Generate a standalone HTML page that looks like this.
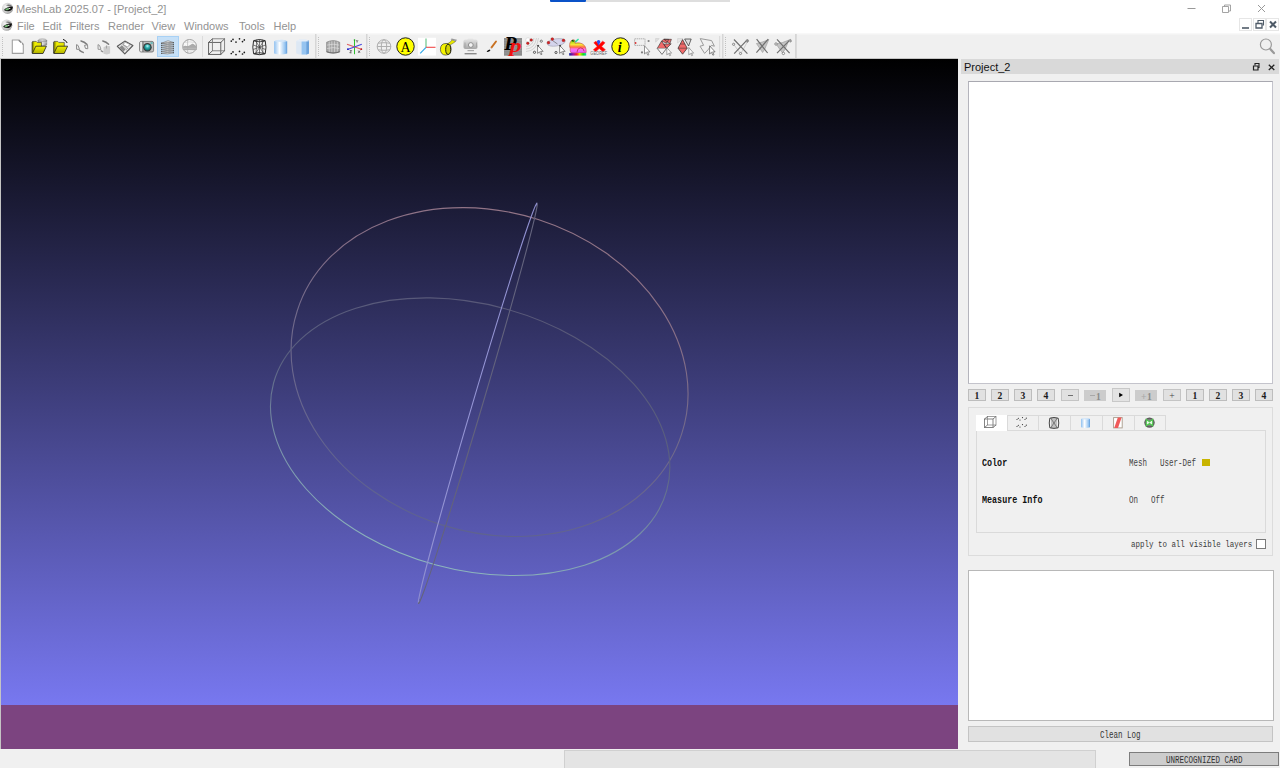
<!DOCTYPE html>
<html><head><meta charset="utf-8">
<style>
*{margin:0;padding:0;box-sizing:border-box}
html,body{width:1280px;height:768px;overflow:hidden;background:#f0f0f0;font-family:"Liberation Sans",sans-serif;position:relative}
.abs{position:absolute}
#title{left:0;top:0;width:1280px;height:34px;background:#fff}
.t{position:absolute;font-size:11px;color:#939393;white-space:nowrap;line-height:11px}
#vp{left:0;top:58px;width:958px;height:691px;background:#c4c4c4}
#vpin{left:1px;top:1px;width:957px;height:690px;background:linear-gradient(#000 0%,#7878f0 93.8%)}
#log{left:0;top:646px;width:957px;height:44px;background:rgba(128,16,16,0.5)}
#dock{left:958px;top:58px;width:322px;height:690px;background:#f0f0f0}
.m{position:absolute;font-family:"Liberation Mono",monospace;white-space:nowrap;font-size:10px;line-height:12px;transform-origin:0 0}
.m.r{transform:scaleX(0.75);color:#444}
.m.b{transform:scaleX(0.84);font-weight:bold;color:#111}
.btn{position:absolute;background:#e1e1e1;border:1px solid #bdbdbd;font-family:"Liberation Serif",serif;font-weight:bold;font-size:9.6px;line-height:11px;text-align:center;color:#1a1a1a}
</style></head><body>
<div id="title" class="abs"></div>
<!-- top blue/gray bars -->
<div class="abs" style="left:550px;top:0;width:36px;height:1.5px;background:#0a52c8;border-radius:0 0 1px 1px"></div>
<div class="abs" style="left:586px;top:0;width:144px;height:1.5px;background:#dedede"></div>

<!-- logos -->
<svg class="abs" style="left:0;top:0" width="16" height="34" viewBox="0 0 16 34">
 <defs><radialGradient id="lg" cx="0.35" cy="0.35" r="0.7"><stop offset="0" stop-color="#f4f4f4"/><stop offset="0.7" stop-color="#c8c8c8"/><stop offset="1" stop-color="#9a9a9a"/></radialGradient></defs>
 <g>
  <circle cx="7.5" cy="8.4" r="5.6" fill="url(#lg)"/>
  <path d="M6 5.2q4-1.6 6.4 1.2l-0.8 1.2q-2.5-1.8-5.6-2.4z" fill="#777"/>
  <path d="M3.9 9.9Q7 6.6 12.9 6.8Q12.6 10.2 9.5 11.1Q6 11.5 3.9 9.9Z" fill="#111"/>
  <ellipse cx="7.3" cy="9.2" rx="2" ry="1" fill="#74b874" transform="rotate(-14 7.3 9.2)"/>
  <ellipse cx="9.6" cy="8.5" rx="0.9" ry="0.5" fill="#e8e8e8" transform="rotate(-20 9.6 8.5)"/>
 </g>
 <g transform="translate(-0.8 16.8)">
  <circle cx="7.5" cy="8.4" r="5.6" fill="url(#lg)"/>
  <path d="M6 5.2q4-1.6 6.4 1.2l-0.8 1.2q-2.5-1.8-5.6-2.4z" fill="#777"/>
  <path d="M3.9 9.9Q7 6.6 12.9 6.8Q12.6 10.2 9.5 11.1Q6 11.5 3.9 9.9Z" fill="#111"/>
  <ellipse cx="7.3" cy="9.2" rx="2" ry="1" fill="#74b874" transform="rotate(-14 7.3 9.2)"/>
  <ellipse cx="9.6" cy="8.5" rx="0.9" ry="0.5" fill="#e8e8e8" transform="rotate(-20 9.6 8.5)"/>
 </g>
</svg>
<div class="t" style="left:16px;top:4px">MeshLab 2025.07 - [Project_2]</div>
<div class="t" style="left:17px;top:21px">File</div>
<div class="t" style="left:42.5px;top:21px">Edit</div>
<div class="t" style="left:69.5px;top:21px">Filters</div>
<div class="t" style="left:108px;top:21px">Render</div>
<div class="t" style="left:151.5px;top:21px">View</div>
<div class="t" style="left:184px;top:21px">Windows</div>
<div class="t" style="left:239px;top:21px">Tools</div>
<div class="t" style="left:273.5px;top:21px">Help</div>

<!-- window controls -->
<svg class="abs" style="left:1180px;top:0" width="100" height="34" viewBox="1180 0 100 34">
 <path d="M1187.5 8.5H1195.5" stroke="#999" stroke-width="1"/>
 <path d="M1222.5 6.5h6v6h-6z M1224.5 6.5v-1.5h6v6h-1.5" fill="none" stroke="#9a9a9a" stroke-width="0.9"/>
 <path d="M1258 5L1265 12M1265 5L1258 12" stroke="#999" stroke-width="1"/>
 <rect x="1239.5" y="18.5" width="12" height="12" fill="#fff" stroke="#e6e6e6"/>
 <rect x="1253.5" y="18.5" width="12" height="12" fill="#fff" stroke="#e6e6e6"/>
 <rect x="1266.5" y="18.5" width="12" height="12" fill="#fff" stroke="#e6e6e6"/>
 <path d="M1242 28H1249" stroke="#4f5b68" stroke-width="1.6"/>
 <path d="M1256 23.5h6v4.5h-6z" fill="none" stroke="#4f5b68" stroke-width="1.3"/>
 <path d="M1258 23v-2.5h5.5v4.5h-1" fill="none" stroke="#4f5b68" stroke-width="1.1"/>
 <path d="M1270 21.5L1276 27.5M1276 21.5L1270 27.5" stroke="#4f5b68" stroke-width="2"/>
</svg>

<!-- toolbar -->
<div class="abs" style="left:0;top:34px;width:1280px;height:24px;background:#f0f0f0"></div>
<svg class="abs" style="left:0;top:0" width="1280" height="60" viewBox="0 0 1280 60">
 <defs>
  <linearGradient id="fy" x1="0" y1="0" x2="0" y2="1"><stop offset="0" stop-color="#f4f400"/><stop offset="1" stop-color="#b0b000"/></linearGradient>
  <linearGradient id="fyb" x1="0" y1="0" x2="1" y2="0"><stop offset="0" stop-color="#606000"/><stop offset="0.3" stop-color="#f0f000"/><stop offset="1" stop-color="#e0e000"/></linearGradient>
  <linearGradient id="cyl1" x1="0" y1="0" x2="1" y2="0"><stop offset="0" stop-color="#8fc0f0"/><stop offset="0.42" stop-color="#ffffff"/><stop offset="0.85" stop-color="#92c2f0"/><stop offset="1" stop-color="#5f9ad8"/></linearGradient>
  <linearGradient id="cylg" x1="0" y1="0" x2="1" y2="0"><stop offset="0" stop-color="#a0a0a0"/><stop offset="0.5" stop-color="#e0e0e0"/><stop offset="1" stop-color="#909090"/></linearGradient>
  <radialGradient id="lens" cx="0.5" cy="0.3" r="0.7"><stop offset="0" stop-color="#c0f8f8"/><stop offset="0.45" stop-color="#30b0b0"/><stop offset="1" stop-color="#086868"/></radialGradient>
  <linearGradient id="rb" x1="0" y1="0" x2="1" y2="0"><stop offset="0" stop-color="#1020a0"/><stop offset="0.25" stop-color="#a010a0"/><stop offset="0.45" stop-color="#ff2020"/><stop offset="0.62" stop-color="#f0e000"/><stop offset="0.82" stop-color="#10e010"/><stop offset="1" stop-color="#10d0c0"/></linearGradient>
  <linearGradient id="bun" x1="0" y1="0" x2="0.3" y2="1"><stop offset="0" stop-color="#20d020"/><stop offset="0.3" stop-color="#f0f020"/><stop offset="0.55" stop-color="#ff6030"/><stop offset="0.75" stop-color="#ff60e0"/><stop offset="1" stop-color="#d040f0"/></linearGradient>
  <linearGradient id="camg" x1="0" y1="0" x2="0" y2="1"><stop offset="0" stop-color="#e8e8e8"/><stop offset="1" stop-color="#a8a8a8"/></linearGradient>
 </defs>
 <!-- white menu -> toolbar soft edge -->
 <rect x="0" y="33" width="1280" height="1.5" fill="#f8f8f8"/>
 <!-- handles -->
 <g fill="#c2c2c2">
  <path id="hdl" d="M2 37h1v1h-1zM2 39h1v1h-1zM2 41h1v1h-1zM2 43h1v1h-1zM2 45h1v1h-1zM2 47h1v1h-1zM2 49h1v1h-1zM2 51h1v1h-1zM2 53h1v1h-1zM2 55h1v1h-1z"/>
  <use href="#hdl" x="316"/>
  <use href="#hdl" x="367"/>
  <use href="#hdl" x="723"/>
 </g>
 <!-- separators -->
 <g fill="#dcdcdc">
  <rect x="202" y="36" width="1" height="21"/>
  <rect x="719" y="36" width="1.2" height="21"/>
 </g>
 <g fill="#d6d6d6">
  <rect x="315" y="34" width="1.5" height="25"/>
  <rect x="366" y="34" width="1.5" height="25"/>
  <rect x="722" y="34" width="1.5" height="25"/>
  <rect x="795" y="34" width="1.8" height="25"/>
 </g>
 <!-- 1 new doc -->
 <path d="M12.3 40h6.6l4.4 4.4v9h-11z" fill="#fff" stroke="#a0a0a0" stroke-width="1.1" stroke-linejoin="round"/>
 <path d="M18.7 40.2l4.4 4.2" stroke="#8a8a8a" stroke-width="1.2"/>
 <circle cx="21.4" cy="43.3" r="0.8" fill="#fff"/>
 <!-- 2 open project -->
 <ellipse cx="42.4" cy="40.4" rx="4.3" ry="1.5" fill="#dcdcdc" stroke="#888" stroke-width="0.6"/>
 <path d="M38.1 40.4v4.5q4.3 1.8 8.6 0v-4.5q-4.3 1.8-8.6 0z" fill="url(#cylg)" stroke="#777" stroke-width="0.5"/>
 <path d="M38.1 42.5q4.3 1.8 8.6 0" stroke="#ddd" stroke-width="0.5" fill="none"/>
 <path d="M32 42.2l0.6-0.8h3.6l1 1h4.3v10.6h-9.5z" fill="url(#fyb)" stroke="#333" stroke-width="0.6"/>
 <path d="M32.3 53.5l3.5-7.3h10.6l-3.4 7.3z" fill="url(#fy)" stroke="#222" stroke-width="0.8" stroke-linejoin="round"/>
 <!-- 3 open -->
 <path d="M53.5 42.2l0.6-0.8h3.6l1 1h5.6v10.6h-10.8z" fill="url(#fyb)" stroke="#333" stroke-width="0.6"/>
 <path d="M53.8 53.5l3.6-7.3h10.2l-3.4 7.3z" fill="url(#fy)" stroke="#222" stroke-width="0.8" stroke-linejoin="round"/>
 <path d="M63 39.4q3 0.8 4.2 3.6" fill="none" stroke="#111" stroke-width="1"/>
 <!-- 4 reload -->
 <g fill="none" stroke="#7c7c7c" stroke-width="1.5" stroke-linecap="round">
  <path d="M81 41q3.5 0.8 5.8 3.3"/>
  <path d="M79.6 50.4q1.8 1.4 3.6 2"/>
 </g>
 <g fill="none" stroke="#8c8c8c" stroke-width="1" stroke-linejoin="round">
  <path d="M84.5 45.4l3-0.7 0.3 4-2.3-0.2z"/>
  <path d="M76.5 44.6l1.6 0.9 1.4 3.9-2.9-0.1z"/>
 </g>
 <!-- 5 reload all -->
 <g fill="none" stroke="#7c7c7c" stroke-width="1.5" stroke-linecap="round">
  <path d="M102.8 41q3.5 0.8 5.8 3.3"/>
 </g>
 <path d="M98 44.6l1.6 0.9 1.4 3.9-2.9-0.1z" fill="none" stroke="#8c8c8c" stroke-width="0.9" stroke-linejoin="round"/>
 <path d="M100.8 50.4q1.2 1 2.6 1.6" fill="none" stroke="#8c8c8c" stroke-width="1.3"/>
 <path d="M103.5 47.3l3-1.5 3.6 0.5v7.2l-3.2 1-3.4-0.8z" fill="#cdcdcd"/>
 <path d="M106.5 45.5v3" stroke="#999" stroke-width="0.8"/>
 <!-- 6 save -->
 <path d="M117.3 46.3l7.5-5.2 8.1 4.4-8.1 8.4z" fill="#e6e6e6" stroke="#5a5a5a" stroke-width="1.1" stroke-linejoin="round"/>
 <path d="M122.6 44.2l3-1.9 4.6 2.3-2.9 2.3z" fill="#fff" stroke="#777" stroke-width="0.6"/>
 <path d="M119.2 47.2l2.8-1.4 3.3 3.8-2 2.4z" fill="#8a8a8a"/>
 <path d="M121.5 45.5l6.5 5.5M123 44.7l6.3 5.3" stroke="#777" stroke-width="0.6"/>
 <!-- 7 camera -->
 <rect x="139.6" y="41.4" width="14" height="10.6" rx="1.6" fill="#c0c0c0" stroke="#6a6a6a" stroke-width="0.8"/>
 <rect x="140.2" y="42" width="2.6" height="9.4" fill="#e8e8e8"/>
 <path d="M142.9 41.6v10.2" stroke="#333" stroke-width="0.7"/>
 <rect x="150.5" y="42.4" width="2.2" height="1.3" fill="#40b8b8"/>
 <circle cx="147.4" cy="47.3" r="4.3" fill="#3a3a3a"/>
 <circle cx="147.4" cy="47.3" r="3.1" fill="url(#lens)"/>
 <!-- highlight button -->
 <rect x="157.5" y="36.5" width="21" height="20" fill="#c6e0f7" stroke="#a8d1f5" stroke-width="1"/>
 <!-- 8 layers -->
 <g stroke="#6a6a6a" stroke-width="0.55" fill="#dcdcdc">
  <path d="M161.2 53.3q6.3-1.5 12.7-0.6q-6.3 2.2-12.7 0.6z"/>
  <path d="M161.2 51.3q6.3-1.5 12.7-0.6q-6.3 2.2-12.7 0.6z"/>
  <path d="M161.2 49.3q6.3-1.5 12.7-0.6q-6.3 2.2-12.7 0.6z"/>
  <path d="M161.2 47.3q6.3-1.5 12.7-0.6q-6.3 2.2-12.7 0.6z"/>
  <path d="M161.2 45.3q6.3-1.5 12.7-0.6q-6.3 2.2-12.7 0.6z"/>
  <path d="M161.2 43.3q6.3-1.5 12.7-0.6q-6.3 2.2-12.7 0.6z"/>
  <path d="M161.2 43.3l6.8-2.6 5.9 1.9q-6.3-0.3-12.7 0.7z" fill="#e4e4e4"/>
 </g>
 <g fill="#555"><circle cx="161.6" cy="43.3" r="0.6"/><circle cx="161.6" cy="45.3" r="0.6"/><circle cx="161.6" cy="47.3" r="0.6"/><circle cx="161.6" cy="49.3" r="0.6"/><circle cx="161.6" cy="51.3" r="0.6"/><circle cx="161.6" cy="53.3" r="0.6"/><circle cx="173.4" cy="42.7" r="0.6"/><circle cx="173.4" cy="44.7" r="0.6"/><circle cx="173.4" cy="46.7" r="0.6"/><circle cx="173.4" cy="48.7" r="0.6"/><circle cx="173.4" cy="50.7" r="0.6"/><circle cx="173.4" cy="52.7" r="0.6"/></g>
 <!-- 9 globe -->
 <circle cx="189.6" cy="46.4" r="6.9" fill="#f6f6f6" stroke="#a0a0a0" stroke-width="1"/>
 <path d="M182.8 46.5q2-1 3.5-0.6t3-0.5 2.5-1.5 3 1.2 2 1.3v3.5h-14z" fill="#ababab"/>
 <path d="M182.9 48.3h13.5" stroke="#ccc" stroke-width="0.5"/>
 <path d="M187.6 39.6v13.6" stroke="#aaa" stroke-width="0.6"/>
 <path d="M184 42.5q5.6-1.2 11.2 0M184 50.5q5.6 1.2 11.2 0" stroke="#c4c4c4" stroke-width="0.5" fill="none"/>
 <!-- 10 box -->
 <g fill="none" stroke="#555" stroke-width="0.9">
  <rect x="208.6" y="42.4" width="12.2" height="12"/>
  <rect x="212.4" y="38.8" width="12.2" height="12" stroke="#7a7a7a"/>
  <path d="M208.6 42.4l3.8-3.6M220.8 42.4l3.8-3.6M208.6 54.4l3.8-3.6M220.8 54.4l3.8-3.6"/>
 </g>
 <!-- 11 points -->
 <g fill="#1a1a1a">
  <circle cx="231.3" cy="41.1" r="0.85"/><circle cx="233" cy="39.4" r="0.85"/><circle cx="236" cy="42.1" r="0.85"/><circle cx="239.5" cy="38.8" r="0.85"/><circle cx="242.5" cy="41.6" r="0.85"/><circle cx="244.3" cy="39.9" r="0.85"/>
  <circle cx="231.3" cy="53.5" r="0.85"/><circle cx="233" cy="51.9" r="0.85"/><circle cx="236" cy="54.6" r="0.85"/><circle cx="239.5" cy="51.4" r="0.85"/><circle cx="242.5" cy="54" r="0.85"/><circle cx="244.3" cy="52.4" r="0.85"/>
 </g>
 <!-- 12 wire -->
 <path d="M253.6 40.6q5.8-2.2 11.6 0q1.6 6.6 0 13.2q-5.8 1.8-11.6 0q-1.6-6.6 0-13.2z" fill="#f2f2f2" stroke="#2e2e2e" stroke-width="1"/>
 <path d="M255 40l9.2 14.2M264.4 40l-9.4 14.2M256.8 39.4l-0.8 15M262.2 39.4l0.8 15M259.5 39.2v15.4M253.2 45q6.3 2 12.4 4.5M265.6 45q-6.3 2-12.4 4.5" stroke="#3c3c3c" stroke-width="0.65" fill="none"/>
 <path d="M254 41q5.5 1.6 11 0M254 53.5q5.5-1.6 11 0" stroke="#222" stroke-width="0.8" fill="none"/>
 <!-- 13 smooth cyl -->
 <path d="M274.1 41.2q6.6-2.8 13.1 0v12.3q-6.6 1.8-13.1 0z" fill="url(#cyl1)"/>
 <path d="M274.1 41.2q6.6-2.8 13.1 0q-6.6 1.6-13.1 0z" fill="#d4e6f8"/>
 <!-- 14 flat cyl -->
 <path d="M296.2 41.2l3.2-1.6h6.6l3 1.6v12.4l-3 1h-6.6l-3.2-1z" fill="#dde8f4"/>
 <path d="M301.6 40.8h5l2.4 0.4v12.4l-2.4 1h-5z" fill="#96c4f0"/>
 <path d="M306.4 40.8l2.6-0.2v13l-2.6 1z" fill="#6ca2da"/>
 <path d="M296.2 41.2l3.2-1.6h6.6l3 1.6l-3 0.4h-6.6z" fill="#e6eef8"/>
 <!-- 15 gray mesh -->
 <path d="M326.6 42.2q6.6-3.2 13.1 0v9.6q-6.6 2.6-13.1 0z" fill="#a4a4a4"/>
 <path d="M329.2 41v11.6M331.8 40.3v12.6M334.6 40.3v12.6M337.3 41v11.6M326.6 45.2q6.6-2 13.1 0M326.6 48.6q6.6-2 13.1 0" stroke="#dedede" stroke-width="0.7" fill="none"/>
 <path d="M326.6 42.2q6.6-3.2 13.1 0v9.6q-6.6 2.6-13.1 0z" fill="none" stroke="#7a7a7a" stroke-width="0.6"/>
 <path d="M326.6 51.2q6.6 2.6 13.1 0v1q-6.6 2.6-13.1 0z" fill="#6a6a6a"/>
 <!-- 16 axes -->
 <path d="M354.5 39.8v14.4" stroke="#30c030" stroke-width="1"/>
 <circle cx="354.5" cy="40" r="0.8" fill="#20a020"/>
 <path d="M347 44.3l15 5.2" stroke="#e06060" stroke-width="1.1"/>
 <path d="M347.5 49.5l14.3-5.2" stroke="#4848e0" stroke-width="1.1"/>
 <circle cx="347.9" cy="49.2" r="0.9" fill="#2020c0"/>
 <circle cx="361.3" cy="49.2" r="0.9" fill="#c02020"/>
 <path d="M356.2 40.2l0.9 1.2 0.9-1.2M357.1 41.4v1.1" stroke="#333" stroke-width="0.7" fill="none"/>
 <path d="M349.8 50.6h1.8l-1.8 2.2h1.8" stroke="#333" stroke-width="0.7" fill="none"/>
 <path d="M358.2 50.6l1.8 2.2M360 50.6l-1.8 2.2" stroke="#333" stroke-width="0.7"/>
 <!-- 17 globe wire -->
 <g fill="none" stroke="#acacac" stroke-width="0.95">
  <circle cx="384" cy="46.5" r="6.8"/>
  <ellipse cx="384" cy="46.5" rx="2.7" ry="6.8"/>
  <path d="M377.2 46.5h13.6M378 43.2q6-1 12 0M378 49.8q6 1 12 0"/>
 </g>
 <!-- 18 A -->
 <circle cx="405.5" cy="46.5" r="8.7" fill="#ffff00" stroke="#1e1e1e" stroke-width="1"/>
 <text x="405.6" y="51.8" text-anchor="middle" font-family="Liberation Serif" font-size="14" fill="#000">A</text>
 <!-- 19 axes2 -->
 <rect x="418" y="37.8" width="18" height="17.7" fill="#fff"/>
 <path d="M426 38.5v8.8" stroke="#60c080" stroke-width="1.1"/>
 <path d="M426 47.3h9.5" stroke="#f04848" stroke-width="1.1"/>
 <path d="M426 47.3l-5.8 6" stroke="#30a8e8" stroke-width="1.2"/>
 <!-- 20 tape -->
 <path d="M445.5 44.2q3.5-0.8 5.2-2.6l1.4-1.8 3.6 1.6-2.2 1.6q-2.4 1.6-5.8 3.2z" fill="#e8e800" stroke="#333" stroke-width="0.4"/>
 <path d="M450.6 39.4l1-0.9 5.4 1.3-1 1.4z" fill="#9a9a9a"/>
 <path d="M446 43.5q-5.5 0-5.6 5.8q0.3 5.8 5.4 5.8q5.3-0.4 5.3-6q-0.2-5.6-5.1-5.6z" fill="#f4f400" stroke="#222" stroke-width="0.6"/>
 <ellipse cx="448.2" cy="49.4" rx="2.5" ry="5" fill="#d4d400" stroke="#111" stroke-width="0.9"/>
 <!-- 21 camera align -->
 <path d="M463.4 41.5q0-2 2-2h1.8l1-1h4.4l1 1h2q2 0 2 2v5.5q0 2-2 2h-10.2q-2 0-2-2z" fill="url(#camg)"/>
 <circle cx="470.8" cy="45" r="2.4" fill="#f2f2f2" stroke="#888" stroke-width="0.9"/>
 <path d="M465 42.5v5M476.5 42.5v5" stroke="#999" stroke-width="0.7"/>
 <rect x="467.5" y="50" width="6.5" height="1.2" fill="#a8a8a8"/>
 <rect x="464.6" y="53" width="12" height="1.4" fill="#8a8a8a"/>
 <!-- 22 brush -->
 <path d="M496 41.5l-4.8 6.3" stroke="#c87020" stroke-width="1.9" stroke-linecap="round"/>
 <path d="M491.2 47.8l-1.3 1.5" stroke="#e8e8e8" stroke-width="1.6"/>
 <path d="M489.8 49.4q-2.2 0.2-3.2 2.4q2.4 0.4 3.8-1.2z" fill="#111"/>
 <!-- 23 PP -->
 <rect x="504" y="38" width="18" height="17.7" fill="#8c8c8c"/>
 <path d="M504 40.5h18M504 43h18M504 45.5h18M504 48h18M504 50.5h18M504 53h18" stroke="#9c9c9c" stroke-width="0.6"/>
 <text x="0" y="0" transform="translate(504.2 50.4) scale(1.15 1.04)" font-family="Liberation Serif" font-style="italic" font-weight="bold" font-size="17.5" fill="#000">P</text>
 <text x="0" y="0" transform="translate(509.6 51.6) scale(1.3 1)" font-family="Liberation Serif" font-style="italic" font-weight="bold" font-size="18.5" fill="#f01010">p</text>
 <!-- 24 point picking -->
 <g fill="none" stroke="#c4c4c4" stroke-width="0.7">
  <path d="M526 46.5q7-0.5 8-8.5"/><path d="M526 49q9-0.5 10.5-11"/><path d="M526 51.5q11-0.5 12.5-13.5"/>
 </g>
 <circle cx="528" cy="40" r="2.3" fill="#fff" stroke="#d0d0d0" stroke-width="0.6"/>
 <circle cx="531.2" cy="40" r="1.3" fill="#d82020" stroke="#802020" stroke-width="0.4"/>
 <circle cx="527.8" cy="43.3" r="1.3" fill="#d82020" stroke="#802020" stroke-width="0.4"/>
 <circle cx="541.3" cy="41.2" r="1.1" fill="none" stroke="#6a6a6a" stroke-width="0.9"/>
 <circle cx="534.5" cy="52.3" r="1.1" fill="none" stroke="#555" stroke-width="1"/>
 <path d="M537.6 45.3v8.2l1.8-1.7 1.5 2.9 1.1-0.5-1.4-2.8h2.5z" fill="#fff" stroke="#5a5a5a" stroke-width="0.7"/>
 <path d="M537.6 45.3l1.2 1" stroke="#333" stroke-width="1.4"/>
 <!-- 25 ellipse pick -->
 <ellipse cx="556.2" cy="42.4" rx="9.2" ry="3.6" fill="#d4d4ec" stroke="#a4a4b4" stroke-width="0.6" transform="rotate(-9 556.2 42.4)"/>
 <path d="M552.5 40.5l5 3.5" stroke="#555" stroke-width="0.6"/>
 <circle cx="552.3" cy="39.1" r="1.4" fill="#d82020" stroke="#802020" stroke-width="0.4"/>
 <circle cx="548.5" cy="42.7" r="1.4" fill="#d82020" stroke="#802020" stroke-width="0.4"/>
 <circle cx="563.5" cy="40.4" r="1.4" fill="#d82020" stroke="#802020" stroke-width="0.4"/>
 <circle cx="556" cy="52.5" r="1.1" fill="none" stroke="#555" stroke-width="1"/>
 <path d="M559.6 45.3v8.2l1.8-1.7 1.5 2.9 1.1-0.5-1.4-2.8h2.5z" fill="#fff" stroke="#5a5a5a" stroke-width="0.7"/>
 <path d="M559.6 45.3l1.2 1" stroke="#333" stroke-width="1.4"/>
 <!-- 26 bunny -->
 <linearGradient id="bun2" gradientUnits="userSpaceOnUse" x1="0" y1="39" x2="0" y2="53"><stop offset="0" stop-color="#20c020"/><stop offset="0.25" stop-color="#c0e020"/><stop offset="0.4" stop-color="#f8e838"/><stop offset="0.58" stop-color="#ff7040"/><stop offset="0.72" stop-color="#ff70f0"/><stop offset="1" stop-color="#e060ff"/></linearGradient>
 <path d="M574.5 41.5l3.6-3 0.9 0.9-3.2 3.4z" fill="#30e0a0"/>
 <path d="M569.6 46.5q-0.4-3.8 1.6-5.8q1.8-1.6 3.4-0.6l0.6 3.2q1-0.6 4.4-0.4q3.6 0.4 5.4 3.4q1.4 2.6 1.2 5.8l-0.4 0.8h-4.8q-1.4-0.4-2.4 0h-7.6l-0.8-2.4q0.4-1.6-0.6-4z" fill="url(#bun2)" stroke="#c03030" stroke-width="0.5"/>
 <path d="M577 52.2q0.2-4 3.4-4.4q3.2 0 3.8 3.6" fill="none" stroke="#c02850" stroke-width="0.8"/>
 <path d="M572 40.2l1.6 1.4" stroke="#0a500a" stroke-width="1.3"/>
 <rect x="569.2" y="53.1" width="17" height="2.5" fill="url(#rb)"/>
 <!-- 27 georef -->
 <path d="M593.8 42.8l3.4 3.6-3.8 3.4 2.4 1.8 3.4-3.2 3.6 3.2 2.6-1.8-3.8-3.4 3.4-3.6-2.4-1.6-3.4 3.2-3.2-3.2z" fill="#ff0000" stroke="#ff2020" stroke-width="0.6" stroke-linejoin="round"/>
 <path d="M598.6 45.8l-1.6-3.6a1.7 1.7 0 1 1 3.2 0z" fill="#2a50f0"/>
 <text x="590.3" y="55.3" font-family="Liberation Sans" font-size="4.8" fill="#6a6a6a" textLength="16.8" lengthAdjust="spacingAndGlyphs">GEOREF</text>
 <!-- 28 info -->
 <circle cx="620.5" cy="46.5" r="8.7" fill="#ffff00" stroke="#1e1e1e" stroke-width="1"/>
 <text x="619.6" y="52.2" text-anchor="middle" font-family="Liberation Serif" font-style="italic" font-weight="bold" font-size="14" fill="#000">i</text>
 <!-- 29 select rect -->
 <rect x="634.6" y="38.8" width="10.4" height="6.6" fill="none" stroke="#a8a8a8" stroke-width="0.9" stroke-dasharray="1.4 0.6"/>
 <circle cx="635.6" cy="43" r="0.9" fill="#d83030"/>
 <circle cx="648.6" cy="41" r="1.1" fill="#808080"/><circle cx="642" cy="52.4" r="1.1" fill="#808080"/>
 <path d="M644.5 45.8v8.2l1.8-1.7 1.5 2.9 1.1-0.5-1.4-2.8h2.5z" fill="#fff" stroke="#6a6a6a" stroke-width="0.7"/>
 <!-- 30 select faces -->
 <path d="M655.6 38.6h3.6l-3.6 3.6z" fill="#e0e0e0" stroke="#bbb" stroke-width="0.4"/>
 <path d="M657.2 48.4l4.4-7.4 5 7.4z M661.6 41l2.2-1.8 5 0.2-2.2 3.8z M666.6 48.4l-2.8-4.2 7.4-0.4z M664 39.3h7.4l-1.6 4.5z" fill="#f06a6a" stroke="#2e2e2e" stroke-width="0.6"/>
 <path d="M657.2 48.4l4.8 6 4.6-6" fill="#f4f4f4" stroke="#444" stroke-width="0.7"/>
 <path d="M666.8 47.5v7.4l1.6-1.5 1.3 2.3 0.9-0.4-1.2-2.2h2.2z" fill="#fff" stroke="#6a6a6a" stroke-width="0.6"/>
 <!-- 31 select verts -->
 <path d="M677.6 38.6h5.4l-5.4 4.4z" fill="#e6e6e6" stroke="#bbb" stroke-width="0.4"/>
 <path d="M678 48.2l4.6-8.6 4.6 8.6-4.6 6z" fill="#f06a6a" stroke="#2e2e2e" stroke-width="0.7"/>
 <path d="M678 48.2l9.2 0M680.3 44l4.6 0" stroke="#2e2e2e" stroke-width="0.5"/>
 <path d="M684.6 39h6.6l-2.6 7z" fill="#dedede" stroke="#2e2e2e" stroke-width="0.7"/>
 <path d="M688.8 47.5v7.4l1.6-1.5 1.3 2.3 0.9-0.4-1.2-2.2h2.2z" fill="#fff" stroke="#6a6a6a" stroke-width="0.6"/>
 <!-- 32 polyline -->
 <path d="M700.2 38.6l11.4 2 2.8 5.6-3-0.8-3.4 4.4-3.4 3.6-4.6-7.2 3.6-0.9z" fill="none" stroke="#9a9a9a" stroke-width="1"/>
 <path d="M709.6 45.8v8.2l1.8-1.7 1.5 2.9 1.1-0.5-1.4-2.8h2.5z" fill="#fff" stroke="#555" stroke-width="0.7"/>
 <!-- 33 X1 -->
 <path d="M733.8 44.5l4 5.5 3 3.5 3.5-6 3.6-6.8" fill="none" stroke="#b4b4b4" stroke-width="0.6"/>
 <path d="M734 39.5l13.4 14.2M734.2 53.6l13.2-14" stroke="#707070" stroke-width="1.2"/>
 <circle cx="733.6" cy="44.3" r="1.1" fill="#f0f0f0" stroke="#707070" stroke-width="0.8"/>
 <circle cx="740.5" cy="53.5" r="1.1" fill="#f0f0f0" stroke="#707070" stroke-width="0.8"/>
 <path d="M745.6 40.5l2.2-1.6 1.4 2.2-2 1.8z" fill="#888"/>
 <!-- 34 X2 -->
 <path d="M756.4 43.5l6-1.5 6.4-2.4-4 9.5-2.2 3.4z" fill="#c4c4c4" stroke="#8a8a8a" stroke-width="0.5"/>
 <path d="M756.6 39.2l11 13.8M756.4 52.6l11.8-13.4" stroke="#707070" stroke-width="1.2"/>
 <!-- 35 X3 -->
 <path d="M776 44l6.5-1.5 6.5-2.5-4 9.5-2.5 3.5z" fill="#c4c4c4" stroke="#8a8a8a" stroke-width="0.5"/>
 <path d="M777 39.3l12.6 13.8M777 53.2l13-13.4" stroke="#707070" stroke-width="1.2"/>
 <circle cx="776" cy="44" r="1.2" fill="#fff" stroke="#707070" stroke-width="0.8"/>
 <circle cx="783.4" cy="53.4" r="1.2" fill="#fff" stroke="#707070" stroke-width="0.8"/>
 <path d="M788.5 40.3l2.2-1.6 1.4 2.6-2 1.5z" fill="#999"/>
 <!-- search -->
 <circle cx="1265.9" cy="44.5" r="5.5" fill="none" stroke="#9a9a9a" stroke-width="1.2"/>
 <path d="M1270.3 49.1l3.6 4" stroke="#9a9a9a" stroke-width="2.2" stroke-linecap="round"/>
</svg>


<!-- viewport -->
<div id="vp" class="abs"><div id="vpin" class="abs"><div id="log" class="abs"></div></div></div>
<svg class="abs" style="left:0;top:0" width="958" height="748" viewBox="0 0 958 748">
 <defs>
  <linearGradient id="g1" gradientUnits="userSpaceOnUse" x1="538" y1="220.1" x2="441.1" y2="524">
   <stop offset="0" stop-color="#927486"/><stop offset="0.25" stop-color="#866e86"/><stop offset="0.5" stop-color="#726a8a"/><stop offset="1" stop-color="#5e6290"/>
  </linearGradient>
  <linearGradient id="g2" gradientUnits="userSpaceOnUse" x1="505.1" y1="308.7" x2="435.2" y2="564.7">
   <stop offset="0" stop-color="#585878"/><stop offset="0.4" stop-color="#5a6080"/><stop offset="0.7" stop-color="#7890a8"/><stop offset="1" stop-color="#8cb4bc"/>
  </linearGradient>
  <linearGradient id="g3" gradientUnits="userSpaceOnUse" x1="473.1" y1="401.9" x2="482.5" y2="404.7">
   <stop offset="0" stop-color="#9494d4"/><stop offset="0.49" stop-color="#8c8ccc"/><stop offset="0.51" stop-color="#64647e"/><stop offset="1" stop-color="#62627c"/>
  </linearGradient>
 </defs>
 <path d="M681.84 433.35A201.82 159.48 17.68 1 0 297.27 310.76A201.82 159.48 17.68 1 0 681.84 433.35Z" fill="none" stroke="url(#g1)" stroke-width="1.1"/>
 <path d="M666.75 490.41A203.79 132.69 15.28 1 0 273.57 383.00A203.79 132.69 15.28 1 0 666.75 490.41Z" fill="none" stroke="url(#g2)" stroke-width="1.1"/>
 <path d="M418.52 603.4A208.7 4.9 106.5 1 0 537.08 203.2A208.7 4.9 106.5 1 0 418.52 603.4Z" fill="none" stroke="url(#g3)" stroke-width="1.1"/>
</svg>


<!-- dock -->
<div id="dock" class="abs"></div>
<!-- dock title -->
<div class="abs" style="left:961px;top:59px;width:318px;height:15px;background:#d9d9d9"></div>
<div class="t" style="left:964px;top:62px;color:#111">Project_2</div>
<svg class="abs" style="left:1250px;top:60px" width="30" height="14" viewBox="1250 60 30 14">
 <path d="M1253.5 66h4.5v4h-4.5z" fill="none" stroke="#222" stroke-width="1.2"/>
 <path d="M1255 65.5v-2h4v4h-1" fill="none" stroke="#222" stroke-width="1.1"/>
 <path d="M1268.8 64.8l5.5 5.2M1274.3 64.8l-5.5 5.2" stroke="#222" stroke-width="1.3"/>
</svg>
<!-- layer list -->
<div class="abs" style="left:968px;top:81px;width:305px;height:303px;background:#fff;border:1px solid #c4c4cc;border-top-color:#a8a8b0;border-left-color:#b4b4bc"></div>
<!-- button row -->
<div class="btn" style="left:968px;top:389px;width:18px;height:12px">1</div>
<div class="btn" style="left:991px;top:389px;width:18px;height:12px">2</div>
<div class="btn" style="left:1014px;top:389px;width:18px;height:12px">3</div>
<div class="btn" style="left:1037px;top:389px;width:18px;height:12px">4</div>
<div class="btn" style="left:1061px;top:389px;width:18px;height:12px;border-color:#c4c4c4"><div class="abs" style="left:6px;top:4.5px;width:5px;height:1.6px;background:#707070"></div></div>
<div class="btn" style="left:1084px;top:390px;width:22px;height:11px;background:#cccccc;border:none;color:#8a8a8a"><div class="abs" style="left:6px;top:4.5px;width:5px;height:1.5px;background:#a8a8a8"></div><span style="position:absolute;left:12px;top:0.5px">1</span></div>
<div class="btn" style="left:1112px;top:388px;width:17.5px;height:14px;border-color:#c8c8c8;background:#e3e3e3"><svg class="abs" style="left:0;top:0" width="16" height="12" viewBox="0 0 16 12"><path d="M6.2 3.8L10 6L6.2 8.2z" fill="#000"/></svg></div>
<div class="btn" style="left:1135px;top:390px;width:22px;height:11px;background:#cccccc;border:none;color:#8a8a8a"><span style="position:absolute;left:6px;top:0.5px;color:#a8a8a8">+</span><span style="position:absolute;left:12px;top:0.5px">1</span></div>
<div class="btn" style="left:1163px;top:389px;width:18px;height:12px;color:#444;font-weight:normal;border-color:#c4c4c4">+</div>
<div class="btn" style="left:1186px;top:389px;width:18px;height:12px">1</div>
<div class="btn" style="left:1209px;top:389px;width:18px;height:12px">2</div>
<div class="btn" style="left:1232px;top:389px;width:18px;height:12px">3</div>
<div class="btn" style="left:1255px;top:389px;width:18px;height:12px">4</div>
<!-- groupbox -->
<div class="abs" style="left:968px;top:407px;width:305px;height:149px;border:1px solid #dcdcdc"></div>
<!-- tab pane -->
<div class="abs" style="left:976px;top:430px;width:290px;height:103px;border:1px solid #dadada"></div>
<!-- tabs -->
<div class="abs" style="left:1007px;top:415px;width:159px;height:15px;border:1px solid #dadada;border-bottom:none;background:#f0f0f0"></div>
<div class="abs" style="left:1038px;top:415px;width:1px;height:15px;background:#dadada"></div>
<div class="abs" style="left:1070px;top:415px;width:1px;height:15px;background:#dadada"></div>
<div class="abs" style="left:1102px;top:415px;width:1px;height:15px;background:#dadada"></div>
<div class="abs" style="left:1134px;top:415px;width:1px;height:15px;background:#dadada"></div>
<div class="abs" style="left:976px;top:415px;width:31px;height:16px;background:#fff"></div>
<svg class="abs" style="left:976px;top:414px" width="192" height="16" viewBox="976 414 192 16">
 <defs><linearGradient id="cyl2" x1="0" y1="0" x2="1" y2="0"><stop offset="0" stop-color="#8fc0f0"/><stop offset="0.4" stop-color="#ffffff"/><stop offset="0.85" stop-color="#92c2f0"/><stop offset="1" stop-color="#5f9ad8"/></linearGradient></defs>
 <g fill="none" stroke="#666" stroke-width="0.8">
  <rect x="984.5" y="419" width="8.5" height="8.5"/>
  <rect x="987.5" y="416.5" width="8.5" height="8.5" stroke="#888"/>
  <path d="M984.5 419l3-2.5M993 419l3-2.5M984.5 427.5l3-2.5M993 427.5l3-2.5"/>
 </g>
 <g fill="#333">
  <circle cx="1017" cy="419.5" r="0.6"/><circle cx="1018.3" cy="418.3" r="0.6"/><circle cx="1020" cy="420" r="0.6"/><circle cx="1022.5" cy="417.6" r="0.6"/><circle cx="1025" cy="419.5" r="0.6"/><circle cx="1026.3" cy="418.2" r="0.6"/>
  <circle cx="1017" cy="426.5" r="0.6"/><circle cx="1018.3" cy="425.3" r="0.6"/><circle cx="1020" cy="427" r="0.6"/><circle cx="1022.5" cy="424.6" r="0.6"/><circle cx="1025" cy="426.5" r="0.6"/><circle cx="1026.3" cy="425.2" r="0.6"/>
 </g>
 <path d="M1049.8 418.2q4.2-1.4 8.4 0q1.1 4.8 0 9.6q-4.2 1.2-8.4 0q-1.1-4.8 0-9.6z" fill="#f0f0f0" stroke="#333" stroke-width="0.9"/>
 <path d="M1050.6 418l6.8 10M1057.4 418l-6.8 10M1052 417.6v10.6M1056 417.6v10.6M1054 417.4v11" stroke="#444" stroke-width="0.55" fill="none"/>
 <path d="M1081 419q4.5-1.8 9 0v8.3q-4.5 1.2-9 0z" fill="url(#cyl2)"/>
 <path d="M1081 419q4.5-1.8 9 0q-4.5 1.2-9 0z" fill="#d4e6f8"/>
 <rect x="1113.6" y="417.6" width="8.6" height="10.3" fill="#fff" stroke="#a89a8a" stroke-width="0.9"/>
 <path d="M1114.2 428l3.6-10.6h3.8l-3.6 10.6z" fill="#f05a5a"/>
 <circle cx="1149.5" cy="422.6" r="5.2" fill="#5a5a5a"/>
 <circle cx="1149.5" cy="422.6" r="3.8" fill="#7a7a7a"/>
 <path d="M1146.3 419.4l3.2 2.4 3.2-2.4v6.4l-3.2-2.4-3.2 2.4z" fill="#e8f8e8" stroke="#50c850" stroke-width="1.1"/>
</svg>
<!-- labels -->
<div class="m b" style="left:982px;top:458.3px">Color</div>
<div class="m r" style="left:1129px;top:458px">Mesh</div>
<div class="m r" style="left:1159.5px;top:458px">User-Def</div>
<div class="abs" style="left:1202px;top:459px;width:8px;height:7px;background:#c8b400"></div>
<div class="m b" style="left:982px;top:495.3px">Measure Info</div>
<div class="m r" style="left:1129px;top:495px">On</div>
<div class="m r" style="left:1150.5px;top:495px">Off</div>
<div class="m" style="left:1130.5px;top:539.8px;color:#3a3a3a;font-size:8.6px;line-height:10px;transform:scaleX(0.87)">apply to all visible layers</div>
<div class="abs" style="left:1256px;top:539px;width:10px;height:10px;background:#fff;border:1px solid #7a7a7a"></div>
<!-- log -->
<div class="abs" style="left:968px;top:570px;width:306px;height:151px;background:#fff;border:1px solid #b8b8b8"></div>
<div class="abs" style="left:968px;top:726px;width:305px;height:16px;background:#e1e1e1;border:1px solid #c4c4c4"></div>
<div class="m r" style="left:1100px;top:729.5px;color:#333">Clean Log</div>
<!-- status bar -->
<div class="abs" style="left:564px;top:750px;width:532px;height:19px;background:#e4e4e4;border:1px solid #d0d0d0"></div>
<div class="abs" style="left:1129px;top:751.5px;width:150px;height:14.5px;background:#cdcdcd;border:1px solid #7c7c7c"></div>
<div class="m r" style="left:1166px;top:755px;color:#333">UNRECOGNIZED CARD</div>
<!-- status -->
</body></html>
